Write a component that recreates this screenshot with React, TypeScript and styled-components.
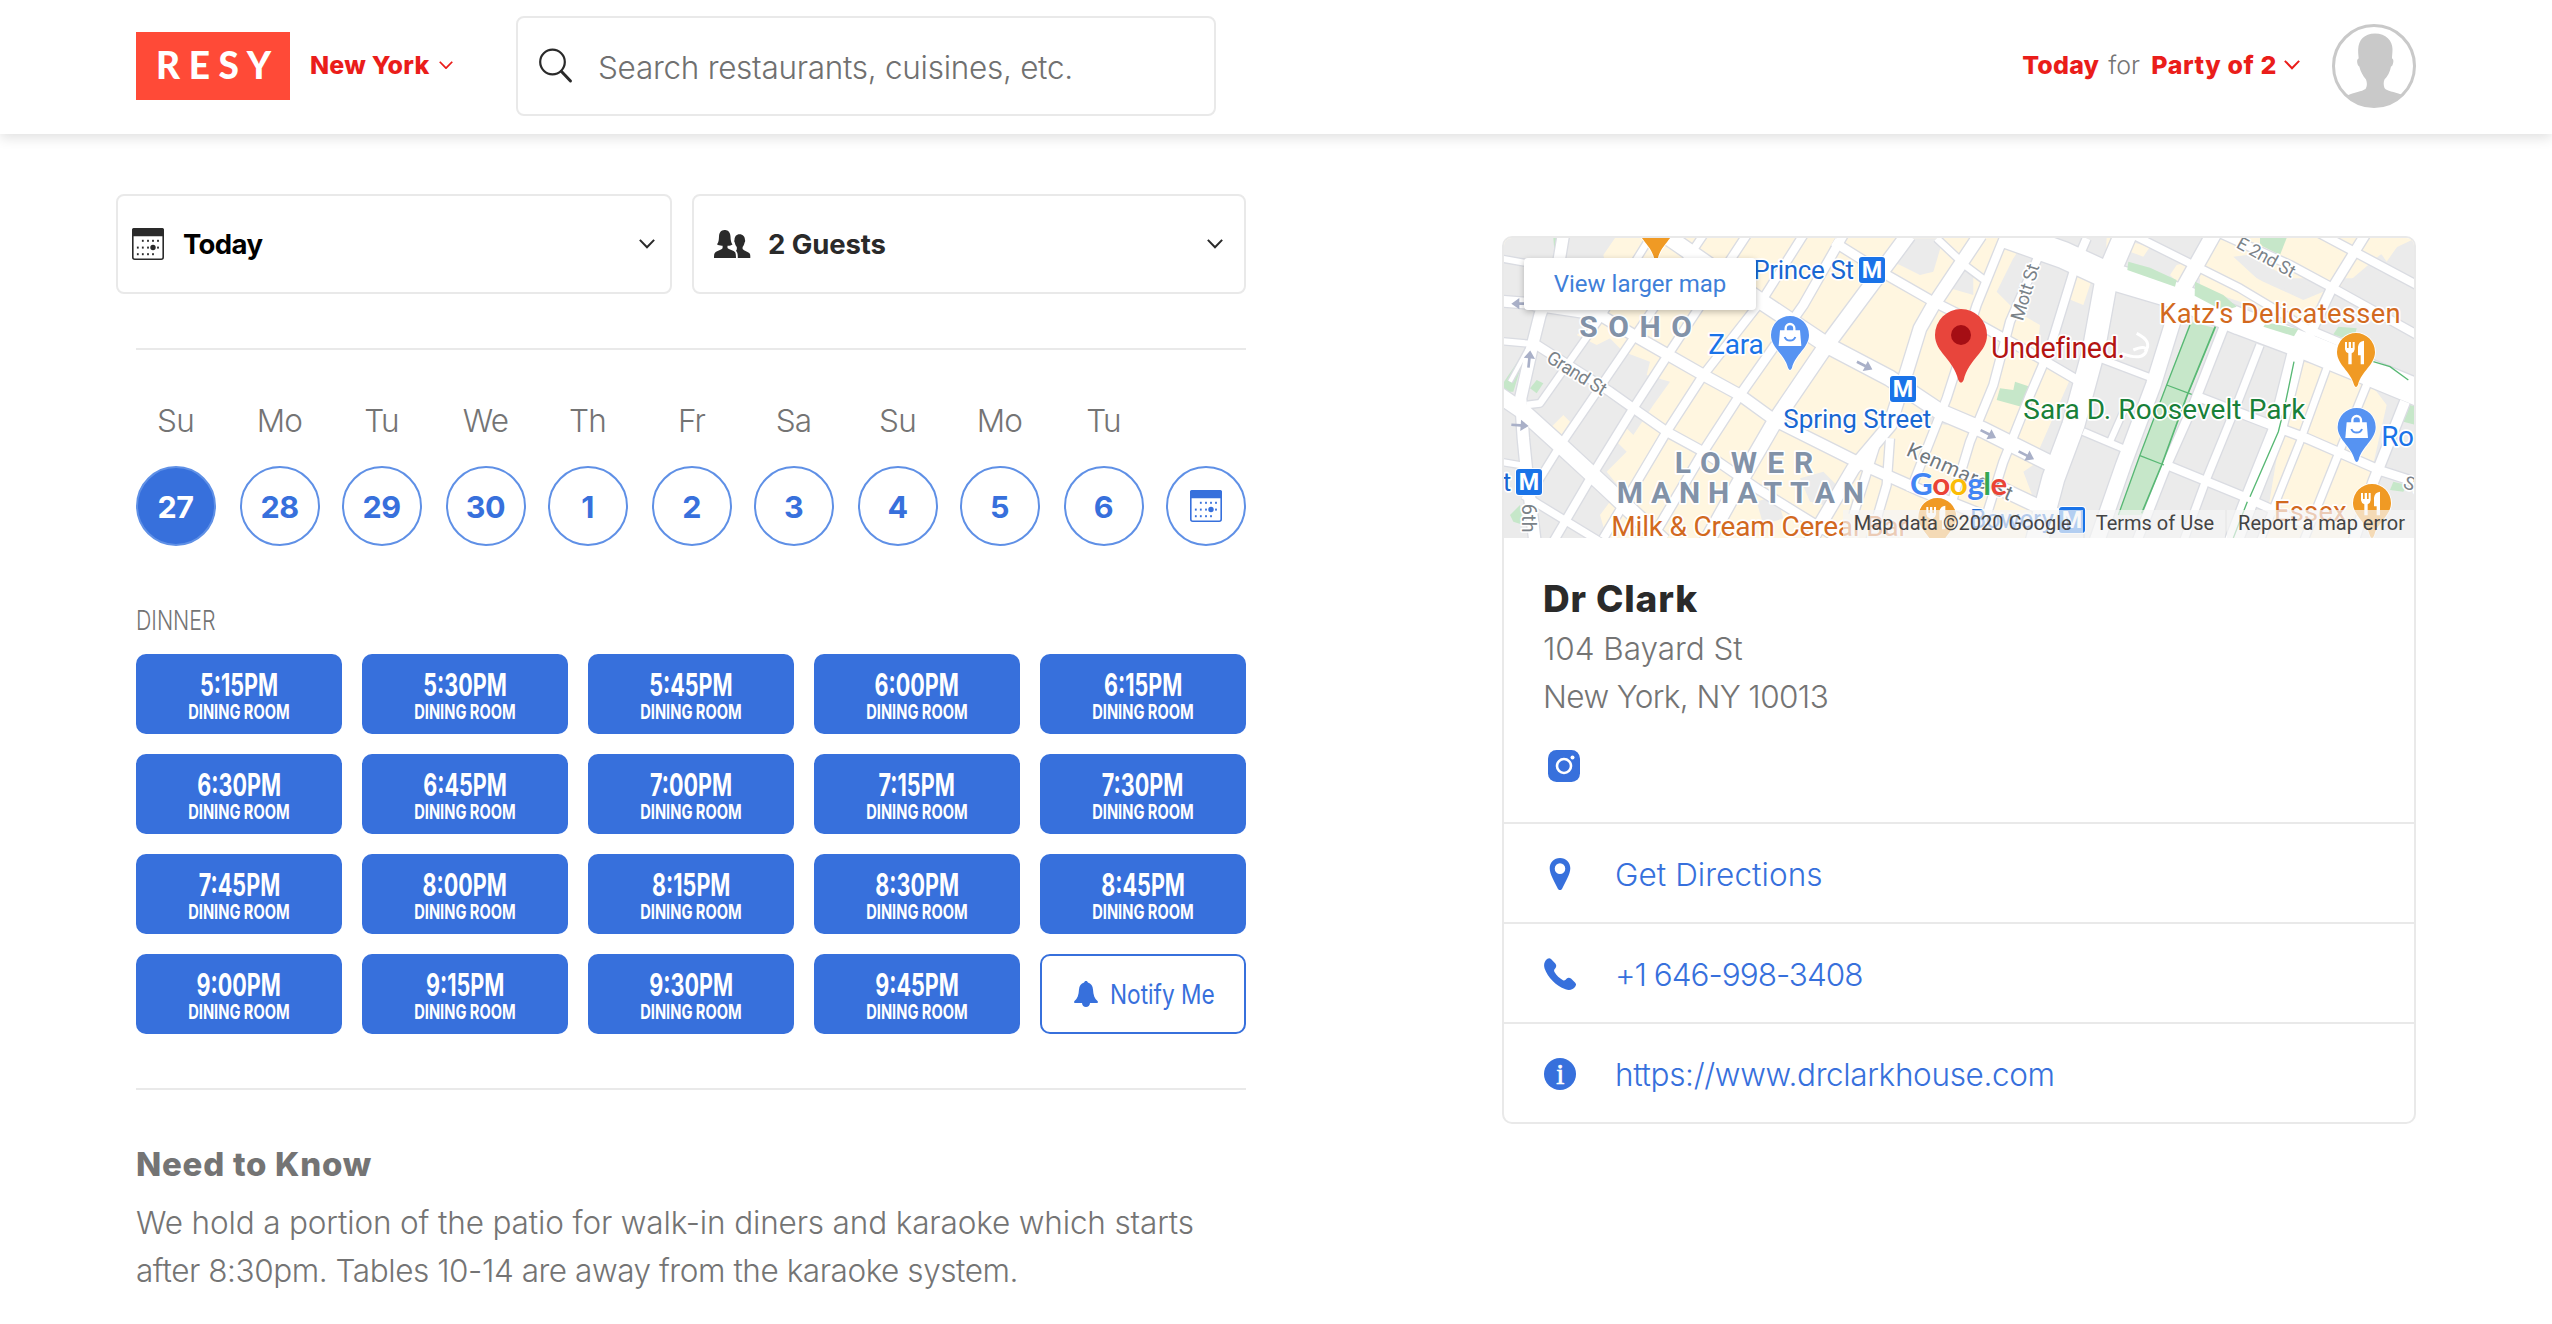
import React from "react";
import styled, { createGlobalStyle, css } from "styled-components";

const BLUE = "#3770dc";
const RED = "#ea1d1a";
const GRAY = "#747474";
const LINE = "#e9e9e9";
const INK = "#2a2a2a";

const GlobalStyle = createGlobalStyle`
  * { box-sizing: border-box; }
  body {
    margin: 0;
    background: #fff;
    font-family: Inter, "Liberation Sans", sans-serif;
    font-variant-ligatures: none;
    color: ${GRAY};
    overflow: hidden;
  }
  button { font-family: inherit; margin: 0; cursor: pointer; }
  a { text-decoration: none; }
  svg { display: block; flex: none; }
`;

/* ---------- header ---------- */

const Header = styled.header`
  height: 134px;
  padding: 0 136px 2px;
  display: flex;
  align-items: center;
  background: #fff;
  box-shadow: 0 4px 12px rgba(0, 0, 0, 0.12);
`;

const Logo = styled.a`
  width: 154px;
  height: 68px;
  padding: 0 0 3px 20px;
  display: flex;
  align-items: center;
  background: #ff4a37;
  color: #fff;
  font-family: Lato, sans-serif;
  font-weight: 900;
  font-size: 37px;
  line-height: 64px;
  letter-spacing: 8.6px;
`;

const HeaderLink = styled.button<{ $track?: number }>`
  border: 0;
  padding: 0 0 2px;
  background: none;
  display: flex;
  align-items: center;
  color: ${RED};
  font-size: 25px;
  line-height: 32px;
  font-weight: 800;
  letter-spacing: ${(p) => p.$track ?? 0.2}px;
  white-space: nowrap;
`;

const City = styled(HeaderLink)`
  margin-left: 20px;
  gap: 10px;
  width: 206px;
`;

const SearchBox = styled.label`
  width: 700px;
  height: 100px;
  display: flex;
  align-items: center;
  padding-left: 20px;
  border: 2px solid ${LINE};
  border-radius: 8px;
`;

const SearchInput = styled.input`
  flex: 1;
  min-width: 0;
  height: 60px;
  margin-left: 24px;
  padding: 2px 0 0;
  border: 0;
  outline: 0;
  background: none;
  color: ${GRAY};
  font-family: inherit;
  font-weight: 320;
  font-size: 31.5px;
  letter-spacing: -0.28px;
  &::placeholder { color: #707070; opacity: 1; }
`;

const HeaderRight = styled.div`
  margin-left: auto;
  display: flex;
  align-items: center;
`;

const For = styled.span`
  width: 52px;
  padding: 0 0 2px 9px;
  font-size: 25px;
  line-height: 32px;
  font-weight: 320;
`;

const PartyLink = styled(HeaderLink)`
  gap: 7px;
  margin-right: 32px;
`;

/* ---------- layout ---------- */

const Main = styled.main`
  display: flex;
  justify-content: space-between;
  align-items: flex-start;
  padding: 60px 136px 0;
`;

const Booking = styled.section`
  width: 1110px;
`;

const Selects = styled.div`
  display: flex;
  gap: 20px;
  margin-left: -20px;
`;

const Select = styled.button<{ $width: number; $pad: string; $gap: number; $color: string; $track: number }>`
  width: ${(p) => p.$width}px;
  height: 100px;
  display: flex;
  align-items: center;
  gap: ${(p) => p.$gap}px;
  padding: ${(p) => p.$pad};
  border: 2px solid ${LINE};
  border-radius: 8px;
  background: #fff;
  color: ${(p) => p.$color};
  font-size: 27.5px;
  font-weight: 700;
  letter-spacing: ${(p) => p.$track}px;
  & > svg:last-child { margin-left: auto; }
`;

const Divider = styled.hr<{ $top: number }>`
  height: 2px;
  margin: ${(p) => p.$top}px 0 0;
  border: 0;
  background: ${LINE};
`;

const Days = styled.div`
  display: flex;
  margin-top: 46px;
`;

const Day = styled.div`
  width: 80px;
  display: flex;
  flex-direction: column;
  justify-content: flex-end;
  align-items: center;
  gap: 21px;
  &:nth-child(odd) { margin-right: 24px; }
  &:nth-child(even) { margin-right: 22px; }
  &:last-child { margin-right: 0; }
`;

const DayName = styled.span`
  padding-right: 1px;
  font-size: 31.5px;
  line-height: 49px;
  font-weight: 320;
  letter-spacing: -0.8px;
`;

const DayButton = styled.button<{ $on?: boolean }>`
  width: 80px;
  height: 80px;
  padding: 0;
  display: flex;
  align-items: center;
  justify-content: center;
  border: 2px solid #5f90e6;
  border-radius: 50%;
  background: ${(p) => (p.$on ? BLUE : "#fff")};
  color: ${(p) => (p.$on ? "#fff" : BLUE)};
  font-size: 30.5px;
  font-weight: 700;
  letter-spacing: -0.5px;
`;

const DayNumber = styled.span`
  padding-right: 1px;
`;

const Meal = styled.h3`
  margin: 54px 0 0 0;
  font-size: 27.5px;
  line-height: 40px;
  font-weight: 350;
  transform: scaleX(0.775);
  transform-origin: left;
`;

const Slots = styled.div`
  margin-top: 14px;
  display: grid;
  grid-template-columns: repeat(5, 206px);
  grid-auto-rows: 80px;
  gap: 20px;
`;

const Slot = styled.button`
  display: flex;
  flex-direction: column;
  align-items: center;
  padding: 17px 0 0;
  border: 0;
  border-radius: 10px;
  background: ${BLUE};
  color: #fff;
`;

const SlotTime = styled.span`
  font-size: 31.5px;
  line-height: 28px;
  font-weight: 750;
  white-space: nowrap;
  transform: scaleX(0.685);
`;

const SlotRoom = styled.span`
  font-size: 20.5px;
  line-height: 26px;
  font-weight: 750;
  white-space: nowrap;
  transform: scaleX(0.715);
`;

const Notify = styled.button`
  display: flex;
  align-items: center;
  padding: 0 0 0 32px;
  border: 2px solid ${BLUE};
  border-radius: 10px;
  background: #fff;
  color: ${BLUE};
`;

const NotifyText = styled.span`
  margin-left: 12px;
  font-size: 27px;
  font-weight: 400;
  white-space: nowrap;
  transform: scaleX(0.84);
  transform-origin: left;
`;

const NoteTitle = styled.h2`
  margin: 54px 0 0;
  font-size: 33px;
  line-height: 40px;
  font-weight: 800;
  letter-spacing: 0.75px;
`;

const NoteLine = styled.span<{ $track: number }>`
  display: block;
  letter-spacing: ${(p) => p.$track}px;
`;

const Note = styled.p`
  margin: 15px 0 0;
  font-size: 31.5px;
  line-height: 48px;
  font-weight: 320;
  white-space: nowrap;
`;

/* ---------- venue card ---------- */

const Card = styled.aside`
  width: 914px;
  margin-top: 42px;
  border: 2px solid ${LINE};
  border-radius: 10px;
  overflow: hidden;
`;

const MapFrame = styled.div`
  position: relative;
  height: 300px;
  overflow: hidden;
`;

const LargerMap = styled.a`
  position: absolute;
  left: 20px;
  top: 20px;
  width: 232px;
  height: 52px;
  display: flex;
  align-items: center;
  justify-content: center;
  border-radius: 4px;
  background: #fff;
  box-shadow: 0 2px 6px rgba(0, 0, 0, 0.25);
  color: #3f7fd9;
  font-family: Roboto, sans-serif;
  font-size: 24px;
`;

const Attribution = styled.div`
  position: absolute;
  right: -2px;
  bottom: 0;
  height: 28px;
  display: flex;
  gap: 2px;
  color: #444;
  font-family: Roboto, sans-serif;
  font-size: 20px;
  line-height: 27px;
  white-space: nowrap;
`;

const Credit = styled.span`
  padding: 0 11px;
  background: rgba(245, 245, 245, 0.7);
`;

const Info = styled.div`
  height: 284px;
  padding: 38px 39px 0;
`;

const VenueName = styled.h1`
  margin: 0;
  color: ${INK};
  font-size: 37px;
  line-height: 45px;
  font-weight: 800;
  letter-spacing: 0.85px;
`;

const Address = styled.p<{ $track: number }>`
  margin: 0;
  font-size: 31.5px;
  line-height: 48px;
  font-weight: 320;
  letter-spacing: ${(p) => p.$track}px;
  &:nth-of-type(1) { margin-top: 4px; }
`;

const Social = styled.a`
  display: block;
  margin: 29px 0 0 5px;
`;

const Row = styled.a<{ $track: number }>`
  height: 100px;
  display: flex;
  align-items: center;
  padding-left: 40px;
  border-top: 2px solid ${LINE};
  color: ${BLUE};
  font-size: 31.5px;
  font-weight: 320;
  letter-spacing: ${(p) => p.$track}px;
`;

const RowIcon = styled.span`
  width: 71px;
  padding-top: 2px;
`;

const RowText = styled.span`
  padding-top: 3px;
`;

/* ---------- icons ---------- */

const Chevron = ({ w = 15, color = RED }: { w?: number; color?: string }) => (
  <svg width={w} height={w * 0.6} viewBox="0 0 15 9" fill="none" stroke={color} strokeWidth="1.9">
    <path d="M.8.8 7.5 7.7 14.2.8" />
  </svg>
);

const SearchIcon = () => (
  <svg width="36" height="36" viewBox="0 0 36 36" fill="none" stroke={INK}>
    <circle cx="14.5" cy="14" r="12.3" strokeWidth="2.2" />
    <path d="M23.5 23.5 32.5 33" strokeWidth="3" strokeLinecap="round" />
  </svg>
);

const calendarDots: [number, number][] = [
  [10.8, 12.8], [16, 12.8], [21, 12.8], [26, 12.8],
  [5.8, 19.6], [10.8, 19.6], [16, 19.6], [26, 19.6],
  [5.8, 26.2], [10.8, 26.2], [16, 26.2], [21, 26.2],
];

const CalendarIcon = ({ color }: { color: string }) => (
  <svg width="32" height="32" viewBox="0 0 32 32" fill={color}>
    <rect x=".8" y=".8" width="30.4" height="30.4" rx="2" fill="none" stroke={color} strokeWidth="1.6" />
    <path d="M0 8.3V2A2 2 0 0 1 2 0H30A2 2 0 0 1 32 2V8.3Z" />
    {calendarDots.map(([x, y]) => (
      <rect key={`${x}-${y}`} x={x - 0.9} y={y - 1} width="1.8" height="2" />
    ))}
    <circle cx="21" cy="19.5" r="2.7" />
  </svg>
);

const GuestsIcon = () => (
  <svg width="37" height="28" viewBox="0 0 37 28" fill={INK}>
    <path d="M10.5 0C13.8-.2 16.300 2.300 16.500 6.500 16.600 10 17 12.500 18.500 14.500 17 15.600 15.300 15.800 13.500 15.700V18C14.500 19.600 20 20 21.300 22.600 21.900 23.800 21.900 26 22 28H0C0 25.500 0 23.800 1.200 22.600 3.200 20.400 7.800 20 8.600 18V15.700C6.500 15.800 4.300 15.500 3 14.300 4.700 12.500 4.800 10 5 6.500 5.200 2.600 7 .2 10.500 0Z" />
    <path d="M25.500 4.200C29 4.200 31 6.800 31 10 31.300 10.400 31.200 12 30.600 12.600 30.200 14.800 29.300 16.200 28.600 17V19C30 21 34 21.600 35.500 23.300 36.500 24.400 36.300 26.500 36.300 28H23.800C23.800 25 23.800 22.500 21.800 20.800 22.800 20.200 23 19 22.800 17 21.700 15.900 21.100 14.300 20.800 12.600 20.200 12 20.100 10.500 20.500 10 20.400 6.800 22.300 4.200 25.500 4.200Z" />
  </svg>
);

const Avatar = () => (
  <svg width="84" height="84" viewBox="0 0 84 84">
    <clipPath id="avatarClip"><circle cx="42" cy="42" r="41" /></clipPath>
    <g clipPath="url(#avatarClip)" fill="#c9c9c9">
      <path d="M43 9.500C54 9.500 60.500 17 60.500 25 60.500 29 60 31.500 60 34.500 61.500 35 61.700 37 61 39.500 60.500 41.500 60 42.500 59 42.500 58 48 55.500 52.500 52.500 55.500 51.300 58.500 51.500 61 52.500 64 55 67.500 62 67.500 69 70.500L84 84H0L15 71.500C22 68.500 30 67.500 33.500 65 35.500 61.500 35 58.500 34 55.500 31 52 28.500 47.500 27.300 42.500 26.300 42.300 25.500 40.500 25.200 38.500 24.900 36 25.400 35 26.700 34.500 26.400 31.500 26 29 26.200 25 26.500 16.500 32 9.500 43 9.500Z" />
    </g>
    <circle cx="42" cy="42" r="40.500" fill="none" stroke="#c9c9c9" strokeWidth="3" />
  </svg>
);

const BellIcon = () => (
  <svg width="24" height="26" viewBox="0 0 24 26" fill={BLUE}>
    <path d="M12 0C13 0 13.700.6 13.900 1.500 17 2.400 18.800 5 19 8.500 19.300 14 20.500 17.500 23.500 20 24.200 20.800 24 22 22.800 22H16C15.800 24.500 14.200 26 12 26S8.200 24.500 8 22H1.200C0 22 -.2 20.800.5 20 3.500 17.500 4.700 14 5 8.500 5.200 5 7 2.400 10.100 1.500 10.300.6 11 0 12 0Z" />
  </svg>
);

const InstagramIcon = () => (
  <svg width="32" height="32" viewBox="0 0 32 32">
    <rect width="32" height="32" rx="8.500" fill={BLUE} />
    <circle cx="16" cy="16" r="7" fill="none" stroke="#fff" strokeWidth="2.600" />
    <circle cx="24.500" cy="7.500" r="2" fill="#fff" />
  </svg>
);

const PinIcon = () => (
  <svg width="32" height="32" viewBox="0 0 32 32" fill={BLUE} fillRule="evenodd">
    <path d="M16 0C22 0 26.300 4.300 26.300 10.300 26.300 16 21.500 24 18 31Q16 33.500 14 31C10.500 24 5.700 16 5.700 10.300 5.700 4.300 10 0 16 0ZM16 5.300A5.200 5.300 0 1 0 16 16A5.200 5.300 0 1 0 16 5.300Z" />
  </svg>
);

const PhoneIcon = () => (
  <svg width="32" height="32" viewBox="0 0 32 32" fill={BLUE}>
    <path d="M3.500.7C4.800-.2 6 0 7 1L11.300 5.500C12.600 7 12.400 8.500 11.500 10 10.500 11.600 9.500 12 10.500 14 12.500 17.500 15.500 20.300 19 22.200 20.700 23 21.300 22 22.500 20.800 23.900 19.300 25.500 19.300 27 20.500L31 24.400C32.300 25.700 32.300 27 31.300 28.500 29.300 31.600 25.500 32.800 21.500 31.300 11.500 27.500 3.800 19.500.6 10.500-.6 6.500.3 3 3.500.7Z" />
  </svg>
);

const InfoText = styled.text`
  font-family: "Liberation Serif", serif;
  font-size: 29px;
  font-weight: 400;
  fill: #fff;
`;

const InfoIcon = () => (
  <svg width="32" height="32" viewBox="0 0 32 32">
    <circle cx="16" cy="16" r="16" fill={BLUE} />
    <InfoText x="16" y="26" textAnchor="middle" stroke="#fff" strokeWidth=".7">i</InfoText>
  </svg>
);

/* ---------- map ---------- */

const mapHalo = css`
  paint-order: stroke;
  stroke: #fff;
  stroke-width: 10px;
  stroke-linejoin: round;
`;

const MapText = styled.text<{ $size: number; $weight?: number; $fill: string; $plain?: boolean }>`
  font-family: Roboto, sans-serif;
  font-size: ${(p) => p.$size}px;
  font-weight: ${(p) => p.$weight ?? 400};
  fill: ${(p) => p.$fill};
  ${(p) => !p.$plain && mapHalo}
`;

const GoogleText = styled.text`
  font-family: Lato, sans-serif;
  font-size: 94px;
  font-weight: 700;
  paint-order: stroke;
  stroke: rgba(255, 255, 255, 0.7);
  stroke-width: 6px;
`;

type Road = [string, number];

const roads: Road[] = [
  ["M30 100 200 130 520 160", 18],
  ["M30 228 200 242", 32],
  ["M30 348 140 358", 18],
  ["M30 710 100 722", 18],
  ["M100 810 330 950", 22],
  ["M220 30 205 120 150 270 130 350 92 520 100 640 112 760 135 950", 34],
  ["M60 470 120 360", 12],
  ["M485 30 330 280 150 535 110 540", 20],
  ["M640 30 430 340 215 655 125 800", 22],
  ["M770 30 540 380 430 550 310 745 190 950", 24],
  ["M940 30 820 220 640 450 530 620 340 940", 24],
  ["M1060 30 940 240 750 510 640 680 480 950", 26],
  ["M1255 30 1010 360 860 580 750 770 650 950", 44],
  ["M1470 30 1330 240 1290 310 1250 440 1200 600 1090 730 960 950", 38],
  ["M1160 650 1090 870", 24],
  ["M1200 640 1190 780 1140 950", 24],
  ["M540 40 800 220 1010 360 1200 460 1350 560 1480 615 1700 725", 46],
  ["M130 240 330 270 430 330 640 450 750 510 860 590 1000 660 1120 720 1300 800 1500 880", 32],
  ["M140 360 360 500 430 550 530 620 640 680 800 790 1060 950", 26],
  ["M20 505 100 560 210 660 340 780 520 950", 46],
  ["M1030 50 1190 150 1330 230 1470 300 1650 400 1770 470", 26],
  ["M1340 40 1430 125 1490 170", 20],
  ["M1545 30 1460 240 1370 520 1260 800", 24],
  ["M1660 60 1560 290 1510 480 1440 650 1380 850", 24],
  ["M1790 40 1760 110 1680 370 1620 510 1540 710 1490 870", 24],
  ["M1910 20 1850 160 1810 380 1750 600 1690 760 1640 950", 66],
  ["M2175 20 2080 190 1990 480 1900 720 1820 950", 44],
  ["M2200 310 2110 540 2030 720 1940 950", 26],
  ["M2310 360 2240 540 2150 760 2080 950", 22],
  ["M2420 380 2360 620 2280 820 2230 950", 52],
  ["M2510 430 2430 650 2310 950", 20],
  ["M2630 480 2540 700 2440 950", 22],
  ["M2745 530 2650 770 2590 950", 30],
  ["M1550 30 1720 90 1850 150 2070 215 2250 290 2450 365 2790 505", 78],
  ["M1830 400 2000 465", 20],
  ["M1780 620 1910 675", 20],
  ["M1860 650 1900 560", 18],
  ["M2110 510 2330 595 2450 640 2680 740 2790 775", 26],
  ["M2030 720 2250 810 2450 900", 24],
  ["M1530 790 1700 870", 40],
  ["M1930 30 2130 130 2250 190 2450 310 2640 390", 22],
  ["M2180 20 2400 120 2530 190 2800 340", 24],
  ["M2480 20 2790 185", 24],
  ["M2625 30 2520 200 2440 370", 28],
];

const Roads = () => (
  <g fill="none" strokeLinejoin="round">
    {roads.map(([d, w]) => <path key={d} d={d} stroke="#dadce2" strokeWidth={w + 8} />)}
    {roads.map(([d, w]) => <path key={d} d={d} stroke="#fff" strokeWidth={w} />)}
  </g>
);

const Metro = ({ x, y }: { x: number; y: number }) => (
  <g transform={`translate(${x} ${y})`}>
    <rect x="-3" y="-3" width="84" height="84" rx="12" fill="#fff" />
    <rect width="78" height="78" rx="9" fill="#1a73e8" />
    <MapText $size={70} $weight={700} $fill="#fff" $plain x="39" y="64" textAnchor="middle">M</MapText>
  </g>
);

const Pin = ({ x, y, kind }: { x: number; y: number; kind: "shop" | "food" }) => (
  <g transform={`translate(${x} ${y})`}>
    <path
      d="M0-57A57 57 0 0 1 57 0C57 38 16 58 6 98Q0 112-6 98C-16 58-57 38-57 0A57 57 0 0 1 0-57Z"
      fill={kind === "shop" ? "#5693f2" : "#f09a24"}
      stroke="#fff"
      strokeWidth="5"
      paintOrder="stroke"
    />
    {kind === "shop" ? (
      <g>
        <path d="M-30-14H30L34 33H-34Z" fill="#fff" />
        <path d="M-13-12V-20A13 13 0 0 1 13-20V-12" fill="none" stroke="#fff" strokeWidth="7" />
        <path d="M-16 6A17 16 0 0 0 16 6" fill="none" stroke="#5693f2" strokeWidth="6" />
      </g>
    ) : (
      <g fill="#fff">
        <path d="M-33-30H-27V-12H-22V-30H-15V-12H-10V-30H-4V-8Q-5 1-13 4V37H-23V4Q-32 1-33-8Z" />
        <path d="M24-34V37H14V10H6V-16Q8-32 24-34Z" />
      </g>
    )}
  </g>
);

const Arrow = ({ x, y, r }: { x: number; y: number; r: number }) => (
  <path transform={`translate(${x} ${y}) rotate(${r})`} d="M-26-4H2V-17L26 0 2 17V4H-26Z" fill="#a9b0c8" />
);

const CityMap = () => (
  <svg width="912" height="300" viewBox="42 39 2736 900">
    <rect x="42" y="39" width="2736" height="900" fill="#fff6e0" />
    <g fill="#ebebeb">
      <path d="M42 39H375L340 90 350 130 300 280 400 380 480 410 470 450 540 470 490 540 430 630 400 600 380 650 410 680 350 740 390 790 330 870 350 939H42Z" />
      <path d="M1200 110 1260 40H1360L1330 140 1290 150 1230 120Z" />
      <path d="M1380 190 1410 130 1450 130V210Z" />
      <path d="M1520 200 1600 39H1850L1830 500 1770 470 1640 400 1650 300 1580 260Z" />
      <path d="M1750 440 1850 160H2778V939H1640L1690 740 1640 690Z" />
      <path d="M1290 560H1380L1370 600 1310 590Z" />
      <path d="M930 760 1000 740 1060 800 1040 850 960 830Z" />
      <path d="M800 830 860 810 880 880 820 900Z" />
      <path d="M1600 740 1660 700 1690 780 1630 820Z" />
      <path d="M1940 39H2160L2080 170 1900 130Z" />
      <path d="M2230 95 2270 90 2400 160 2480 190 2450 230 2380 190 2300 160Z" />
      <path d="M2670 90 2778 39V330L2540 200Z" />
    </g>
    <g fill="#fff6e0">
      <path d="M170 620 220 570 240 590 200 650Z" />
      <path d="M260 330 330 280 380 330 320 360Z" />
      <path d="M1540 60 1590 70 1570 100 1540 90Z" />
      <path d="M1750 130 1810 150 1780 240 1730 220Z" />
      <path d="M1920 50 1980 65 1960 95 1920 80Z" />
      <path d="M2060 120 2100 110 2110 140 2070 180 2040 150Z" />
      <path d="M2130 140 2200 105 2320 170 2440 225 2500 200 2450 300 2250 230 2130 190Z" />
      <path d="M2530 60 2620 40 2550 190 2480 160Z" />
      <path d="M2440 410 2600 450 2660 500 2690 540 2640 760 2600 939H2320L2360 700Z" />
      <path d="M2450 340 2560 350 2700 430 2750 480 2640 420Z" />
      <path d="M2640 39H2740L2690 110Z" />
    </g>
    <g fill="#c6e7c9">
      <path d="M42 470 110 370 70 500 42 500Z" />
      <path d="M120 490 140 465 160 475 140 505Z" />
      <path d="M60 870 90 840 100 900 70 890Z" />
      <path d="M190 39H212L195 100Z" />
      <path d="M1530 490 1570 495 1575 470 1620 485 1610 550 1520 525Z" />
      <path d="M2300 290 2425 310 2415 335 2300 310Z" />
      <path d="M2310 39H2390L2370 90 2310 60Z" />
      <path d="M2760 540 2778 545V600L2740 590Z" />
      <path d="M2710 770 2750 780 2740 800 2700 795Z" />
    </g>
    <Roads />
    <g fill="#c6e7c9">
      <path d="M1915 110 1980 128 2060 165 2055 185 1912 135Z" />
      <path d="M2115 170 2200 210 2240 245 2200 258 2114 212Z" />
      <path d="M2330 292 2425 312 2412 334 2320 305Z" />
      <path d="M2545 305 2600 310 2590 350 2530 328Z" />
      <path d="M2100 290 2178 310 2090 520 1955 870H1885L1950 690 2030 480Z" />
    </g>
    <g fill="none" stroke="#58b874" strokeWidth="4">
      <path d="M2100 300 2030 480 1950 690 1885 870" />
      <path d="M2176 305 2090 515 2015 720 1955 865" strokeWidth="5" />
      <path d="M2030 480 2105 508M1950 692 2022 720" />
      <path d="M2412 410 2385 540 2365 620 2280 815M2272 830 2230 939M2650 410 2700 425 2755 465" />
    </g>
    <path d="M1895 385Q1960 410 1970 375 1965 360 1930 375M1940 325Q1990 350 1965 380" fill="none" stroke="#fff" strokeWidth="9" />

    <Arrow x={90} y={236} r={180} />
    <Arrow x={118} y={402} r={-84} />
    <Arrow x={90} y={601} r={4} />
    <Arrow x={1124} y={422} r={27} />
    <Arrow x={1495} y={627} r={27} />
    <Arrow x={1609} y={691} r={27} />

    <MapText $size={56} $fill="#7a8288" transform="translate(166 408) rotate(32)" textLength="200">Grand St</MapText>
    <MapText $size={56} $fill="#7a8288" transform="translate(1598 290) rotate(-73)" textLength="174">Mott St</MapText>
    <MapText $size={54} $fill="#7a8288" transform="translate(2236 66) rotate(29)" textLength="192">E 2nd St</MapText>
    <MapText $size={62} $fill="#6f787e" transform="translate(1246 690) rotate(24)" textLength="340">Kenmare St</MapText>
    <MapText $size={60} $fill="#7a8288" transform="translate(96 836) rotate(90)">6th</MapText>
    <MapText $size={56} $fill="#7a8288" transform="translate(2736 786) rotate(24)">St</MapText>

    <MapText $size={90} $weight={700} $fill="#8292a8" x="268" y="337" textLength="338" letterSpacing="0">SOHO</MapText>
    <MapText $size={90} $weight={700} $fill="#8292a8" x="554" y="744" textLength="416">LOWER</MapText>
    <MapText $size={90} $weight={700} $fill="#8292a8" x="380" y="834" textLength="742">MANHATTAN</MapText>

    <MapText $size={78} $fill="#1967d2" x="790" y="162" textLength="302">Prince St</MapText>
    <Metro x={1107} y={96} />
    <MapText $size={84} $fill="#1a73e8" x="655" y="387" textLength="166">Zara</MapText>
    <Pin kind="shop" x={900} y={330} />
    <Metro x={1200} y={453} />
    <MapText $size={78} $fill="#1967d2" x="880" y="609" textLength="444">Spring Street</MapText>
    <MapText $size={78} $fill="#1967d2" x="38" y="797">t</MapText>
    <Metro x={78} y={732} />
    <MapText $size={78} $fill="#1967d2" x="1440" y="909" textLength="252">Bowery</MapText>
    <Metro x={1707} y={846} />

    <Pin kind="food" x={498} y={0} />
    <Pin kind="food" x={1342} y={876} />
    <MapText $size={84} $fill="#d2691e" x="364" y="932" textLength="890">Milk &amp; Cream Cereal Bar</MapText>
    <MapText $size={82} $fill="#d2691e" x="2008" y="293" textLength="724">Katz's Delicatessen</MapText>
    <Pin kind="food" x={2598} y={381} />
    <MapText $size={82} $fill="#d2691e" x="2352" y="888" textLength="218">Essex</MapText>
    <Pin kind="food" x={2646} y={834} />
    <Pin kind="shop" x={2600} y={606} />
    <MapText $size={84} $fill="#1a73e8" x="2674" y="662" textLength="98">Ro</MapText>
    <MapText $size={84} $fill="#188038" x="1600" y="581" textLength="846">Sara D. Roosevelt Park</MapText>

    <path d="M1413 252A78 78 0 0 1 1491 330C1491 382 1436 402 1421 465Q1413 482 1405 465C1390 402 1335 382 1335 330A78 78 0 0 1 1413 252Z" fill="#e8453c" />
    <circle cx="1413" cy="330" r="30" fill="#a50e14" />
    <MapText $size={86} $fill="#b31412" x="1503" y="398" textLength="402">Undefined.</MapText>

    <GoogleText x="1260" y="809" textLength="292">
      <tspan fill="#4285f4">G</tspan><tspan fill="#ea4335">o</tspan><tspan fill="#fbbc05">o</tspan>
      <tspan fill="#4285f4">g</tspan><tspan fill="#34a853">l</tspan><tspan fill="#ea4335">e</tspan>
    </GoogleText>
  </svg>
);

/* ---------- data ---------- */

const days: [string, string][] = [
  ["Su", "27"], ["Mo", "28"], ["Tu", "29"], ["We", "30"], ["Th", "1"],
  ["Fr", "2"], ["Sa", "3"], ["Su", "4"], ["Mo", "5"], ["Tu", "6"],
];

const times = [
  "5:15PM", "5:30PM", "5:45PM", "6:00PM", "6:15PM",
  "6:30PM", "6:45PM", "7:00PM", "7:15PM", "7:30PM",
  "7:45PM", "8:00PM", "8:15PM", "8:30PM", "8:45PM",
  "9:00PM", "9:15PM", "9:30PM", "9:45PM",
];

export default function App() {
  return (
    <>
      <GlobalStyle />
      <Header>
        <Logo>RESY</Logo>
        <City>New York <Chevron w={14} /></City>
        <SearchBox>
          <SearchIcon />
          <SearchInput placeholder="Search restaurants, cuisines, etc." />
        </SearchBox>
        <HeaderRight>
          <HeaderLink>Today</HeaderLink>
          <For>for</For>
          <PartyLink $track={0.6}>Party of 2 <Chevron w={16} /></PartyLink>
          <Avatar />
        </HeaderRight>
      </Header>
      <Main>
        <Booking>
          <Selects>
            <Select $width={556} $pad="0 15px 0 14px" $gap={19} $color="#000" $track={-0.6}>
              <CalendarIcon color={INK} /> Today <Chevron w={16} color={INK} />
            </Select>
            <Select $width={554} $pad="0 21px 0 20px" $gap={17} $color={INK} $track={-0.1}>
              <GuestsIcon /> 2 Guests <Chevron w={16} color={INK} />
            </Select>
          </Selects>
          <Divider $top={54} />
          <Days>
            {days.map(([name, num], i) => (
              <Day key={num}>
                <DayName>{name}</DayName>
                <DayButton $on={i === 0}><DayNumber>{num}</DayNumber></DayButton>
              </Day>
            ))}
            <Day>
              <DayButton><CalendarIcon color={BLUE} /></DayButton>
            </Day>
          </Days>
          <Meal>DINNER</Meal>
          <Slots>
            {times.map((t) => (
              <Slot key={t}>
                <SlotTime>{t}</SlotTime>
                <SlotRoom>DINING ROOM</SlotRoom>
              </Slot>
            ))}
            <Notify><BellIcon /><NotifyText>Notify Me</NotifyText></Notify>
          </Slots>
          <Divider $top={54} />
          <NoteTitle>Need to Know</NoteTitle>
          <Note>
            <NoteLine $track={-0.15}>We hold a portion of the patio for walk-in diners and karaoke which starts</NoteLine>
            <NoteLine $track={-0.45}>after 8:30pm. Tables 10-14 are away from the karaoke system.</NoteLine>
          </Note>
        </Booking>
        <Card>
          <MapFrame>
            <CityMap />
            <LargerMap>View larger map</LargerMap>
            <Attribution>
              <Credit>Map data ©2020 Google</Credit>
              <Credit>Terms of Use</Credit>
              <Credit>Report a map error</Credit>
            </Attribution>
          </MapFrame>
          <Info>
            <VenueName>Dr Clark</VenueName>
            <Address $track={-0.05}>104 Bayard St</Address>
            <Address $track={-0.6}>New York, NY 10013</Address>
            <Social><InstagramIcon /></Social>
          </Info>
          <Row $track={0.05}><RowIcon><PinIcon /></RowIcon><RowText>Get Directions</RowText></Row>
          <Row $track={-1}><RowIcon><PhoneIcon /></RowIcon><RowText>+1 646-998-3408</RowText></Row>
          <Row $track={-0.35}><RowIcon><InfoIcon /></RowIcon><RowText>https://www.drclarkhouse.com</RowText></Row>
        </Card>
      </Main>
    </>
  );
}
